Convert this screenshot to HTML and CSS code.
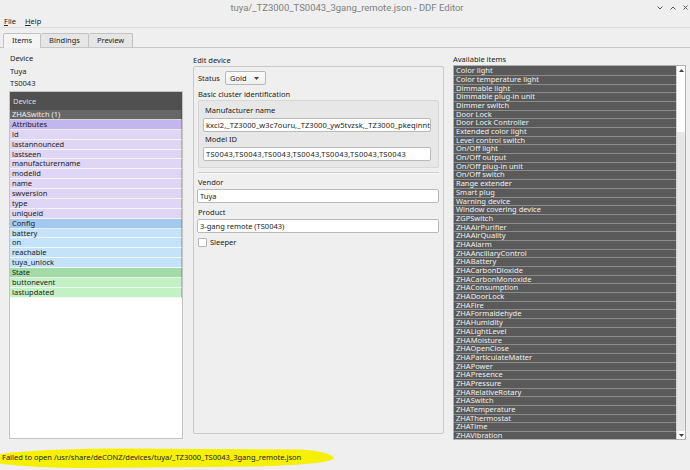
FILE: index.html
```html
<!DOCTYPE html>
<html>
<head>
<meta charset="utf-8">
<link rel="stylesheet" href="styles.css">
</head>
<body>
<div class="window">
  <header class="titlebar">
    <span></span>
    <span class="title">tuya/_TZ3000_TS0043_3gang_remote.json - DDF Editor</span>
    <span class="controls">
      <svg width="6" height="4" viewBox="0 0 6 4"><path d="M0.5 0.5 L3 3 L5.5 0.5" fill="none" stroke="#555" stroke-width="1"/></svg>
      <svg width="6" height="4" viewBox="0 0 6 4"><path d="M0.5 3.5 L3 1 L5.5 3.5" fill="none" stroke="#555" stroke-width="1"/></svg>
      <svg width="5" height="5" viewBox="0 0 5 5"><path d="M0.5 0.5 L4.5 4.5 M4.5 0.5 L0.5 4.5" fill="none" stroke="#555" stroke-width="1"/></svg>
    </span>
  </header>
  <nav class="menubar">
    <span><u>F</u>ile</span>
    <span><u>H</u>elp</span>
  </nav>
  <div class="tabbar">
    <div class="tab active">Items</div>
    <div class="tab">Bindings</div>
    <div class="tab">Preview</div>
  </div>
  <main class="pane">
    <section class="col-left">
      <div class="plain">Device</div>
      <div class="plain">Tuya</div>
      <div class="plain">TS0043</div>
      <div class="tree">
        <div class="tree-head">Device</div>
        <div class="row node">ZHASwitch (1)</div>
        <div class="row attr-h">Attributes</div>
        <div class="row attr">id</div>
        <div class="row attr">lastannounced</div>
        <div class="row attr">lastseen</div>
        <div class="row attr">manufacturername</div>
        <div class="row attr">modelid</div>
        <div class="row attr">name</div>
        <div class="row attr">swversion</div>
        <div class="row attr">type</div>
        <div class="row attr">uniqueid</div>
        <div class="row conf-h">Config</div>
        <div class="row conf">battery</div>
        <div class="row conf">on</div>
        <div class="row conf">reachable</div>
        <div class="row conf">tuya_unlock</div>
        <div class="row state-h">State</div>
        <div class="row state">buttonevent</div>
        <div class="row state">lastupdated</div>
      </div>
    </section>
    <section class="col-mid">
      <div class="caption">Edit device</div>
      <div class="group">
        <div class="status-row">
          <span>Status</span>
          <div class="combo"><span>Gold</span><svg width="5" height="3" viewBox="0 0 5 3"><path d="M0 0 L5 0 L2.5 3 Z" fill="#444"/></svg></div>
        </div>
        <div class="field-label">Basic cluster identification</div>
        <div class="inner-group">
          <div class="field-label inner">Manufacturer name</div>
          <div class="input manu">kxci2,_TZ3000_w3c7ouru,_TZ3000_yw5tvzsk,_TZ3000_pkeqinnt</div>
          <div class="field-label inner">Model ID</div>
          <div class="input model">TS0043,TS0043,TS0043,TS0043,TS0043,TS0043,TS0043</div>
        </div>
        <div class="separator"></div>
        <div class="field-label">Vendor</div>
        <div class="input wide">Tuya</div>
        <div class="field-label">Product</div>
        <div class="input wide">3-gang remote (TS0043)</div>
        <div class="check"><span class="box"></span><span>Sleeper</span></div>
      </div>
    </section>
    <section class="col-right">
      <div class="caption">Available items</div>
      <div class="listbox">
        <div class="list">
          <div class="item">Color light</div>
          <div class="item">Color temperature light</div>
          <div class="item">Dimmable light</div>
          <div class="item">Dimmable plug-in unit</div>
          <div class="item">Dimmer switch</div>
          <div class="item">Door Lock</div>
          <div class="item">Door Lock Controller</div>
          <div class="item">Extended color light</div>
          <div class="item">Level control switch</div>
          <div class="item">On/Off light</div>
          <div class="item">On/Off output</div>
          <div class="item">On/Off plug-in unit</div>
          <div class="item">On/Off switch</div>
          <div class="item">Range extender</div>
          <div class="item">Smart plug</div>
          <div class="item">Warning device</div>
          <div class="item">Window covering device</div>
          <div class="item">ZGPSwitch</div>
          <div class="item">ZHAAirPurifier</div>
          <div class="item">ZHAAirQuality</div>
          <div class="item">ZHAAlarm</div>
          <div class="item">ZHAAncillaryControl</div>
          <div class="item">ZHABattery</div>
          <div class="item">ZHACarbonDioxide</div>
          <div class="item">ZHACarbonMonoxide</div>
          <div class="item">ZHAConsumption</div>
          <div class="item">ZHADoorLock</div>
          <div class="item">ZHAFire</div>
          <div class="item">ZHAFormaldehyde</div>
          <div class="item">ZHAHumidity</div>
          <div class="item">ZHALightLevel</div>
          <div class="item">ZHAMoisture</div>
          <div class="item">ZHAOpenClose</div>
          <div class="item">ZHAParticulateMatter</div>
          <div class="item">ZHAPower</div>
          <div class="item">ZHAPresence</div>
          <div class="item">ZHAPressure</div>
          <div class="item">ZHARelativeRotary</div>
          <div class="item">ZHASwitch</div>
          <div class="item">ZHATemperature</div>
          <div class="item">ZHAThermostat</div>
          <div class="item">ZHATime</div>
          <div class="item">ZHAVibration</div>
        </div>
        <div class="scrollbar">
          <div class="sb-btn"><svg width="5" height="3" viewBox="0 0 5 3"><path d="M0 3 L5 3 L2.5 0 Z" fill="#444"/></svg></div>
          <div class="sb-handle"></div>
          <div class="sb-track"></div>
          <div class="sb-btn"><svg width="5" height="3" viewBox="0 0 5 3"><path d="M0 0 L5 0 L2.5 3 Z" fill="#444"/></svg></div>
        </div>
      </div>
    </section>
  </main>
  <footer class="statusbar">
    <svg class="highlight" width="340" height="24" viewBox="0 0 340 24"><path d="M0 8 C30 4 80 2.5 120 2.5 L300 3.5 C318 4.5 332 8 334 12 C332 16 310 18.5 260 20.5 L90 22 C50 22 15 20 0 17.5 Z" fill="#f6ef06"/></svg>
    <span class="status-text">Failed to open /usr/share/deCONZ/devices/tuya/_TZ3000_TS0043_3gang_remote.json</span>
  </footer>
</div>
</body>
</html>
```
FILE: styles.css
```css
body {
  margin: 0;
  background: #efefef;
  font-family: "Noto Sans", "Open Sans", sans-serif;
  font-size: 7.5px;
  color: #232323;
}

.window {
  width: 690px;
  height: 470px;
  display: flex;
  flex-direction: column;
  overflow: hidden;
}

.titlebar {
  height: 15px;
  display: grid;
  grid-template-columns: 1fr auto 1fr;
  align-items: center;
  font-family: Roboto, sans-serif;
  font-size: 9.5px;
  color: #808080;
}

.title {
  padding-left: 4px;
}

.controls {
  justify-self: end;
  display: flex;
  align-items: center;
  gap: 7px;
  padding-right: 2px;
}

.menubar {
  height: 12px;
  display: flex;
  align-items: center;
  gap: 9px;
  padding-left: 4px;
  border-bottom: 1px solid #dcdcdc;
}

.menubar u {
  text-decoration-thickness: 1px;
  text-underline-offset: 1px;
}

.tabbar {
  margin-top: 5px;
  height: 14px;
  display: flex;
  padding-left: 3px;
  border-bottom: 1px solid #c6c6c6;
}

.tab {
  height: 14px;
  box-sizing: border-box;
  padding: 0 8px;
  line-height: 13px;
  border: 1px solid #c2c2c2;
  border-bottom: none;
  border-left: none;
  background: #e6e6e6;
  border-radius: 2px 2px 0 0;
}

.tab.active {
  height: 15px;
  margin-bottom: -1px;
  border-left: 1px solid #c2c2c2;
  background: #f4f4f4;
}

.pane {
  flex: 1;
  display: flex;
  padding-left: 9px;
  gap: 10px;
  min-height: 0;
}

.col-left {
  width: 174px;
  display: flex;
  flex-direction: column;
  padding-top: 4px;
  padding-bottom: 7px;
}

.plain {
  height: 12.5px;
  line-height: 12.5px;
  padding-left: 1px;
}

.tree {
  margin-top: 1.5px;
  flex: 1;
  background: #fff;
  border: 1px solid #c3c3c3;
  overflow: hidden;
}

.tree-head {
  height: 18px;
  line-height: 18px;
  padding-left: 3px;
  background: #505050;
  color: #dedede;
}

.row {
  height: 9.88px;
  box-sizing: border-box;
  line-height: 9px;
  padding-left: 2px;
  border-bottom: 1px solid rgba(255, 255, 255, 0.75);
  border-right: 1px solid rgba(0, 0, 0, 0.2);
  color: #1c1c1c;
  white-space: nowrap;
}

.row.node { background: #676767; color: #eeeeee; }
.row.attr-h { background: #c3b5ee; }
.row.attr { background: #ded6f4; }
.row.conf-h { background: #a4c9ee; }
.row.conf { background: #c4e2fa; }
.row.state-h { background: #a3dba8; }
.row.state { background: #c4f0c6; }

.col-mid {
  width: 251px;
  display: flex;
  flex-direction: column;
  padding-top: 6px;
  padding-bottom: 12px;
}

.caption {
  height: 12px;
  line-height: 12px;
}

.group {
  flex: 1;
  border: 1px solid #c9c9c9;
  border-radius: 2px;
  padding: 4px 4px 0 4px;
  display: flex;
  flex-direction: column;
}

.status-row {
  height: 14px;
  display: flex;
  align-items: center;
  gap: 5px;
}

.combo {
  width: 41px;
  height: 14px;
  box-sizing: border-box;
  border: 1px solid #b7b7b7;
  border-radius: 2px;
  background: linear-gradient(#fbfbfb, #f0f0f0);
  display: flex;
  align-items: center;
  justify-content: space-between;
  padding: 0 6px 0 4px;
}

.field-label {
  height: 12px;
  line-height: 12px;
  margin-top: 3px;
}

.inner-group {
  background: #e7e7e7;
  border: 1px solid #d6d6d6;
  border-radius: 2px;
  padding: 3px 7px 5px 4px;
}

.field-label.inner {
  margin-top: 0;
  padding-left: 2px;
}

.inner-group .input {
  margin: 2px 0 1px;
}

.input {
  height: 14px;
  box-sizing: border-box;
  line-height: 12px;
  padding-left: 2px;
  background: #fff;
  border: 1px solid #b9b9b9;
  border-radius: 2px;
  white-space: nowrap;
  overflow: hidden;
}

.input.manu {
  letter-spacing: 0.1px;
}

.input.model {
  letter-spacing: 0.27px;
}

.input.wide {
  margin-top: 1px;
  margin-left: -1px;
}

.separator {
  margin-top: 4px;
  height: 0;
  border-top: 1px solid #cbcbcb;
  border-bottom: 1px solid #fafafa;
}

.separator + .field-label {
  margin-top: 2px;
}

.check {
  margin-top: 3px;
  height: 12px;
  display: flex;
  align-items: center;
  gap: 3px;
}

.box {
  width: 9px;
  height: 9px;
  box-sizing: border-box;
  border: 1px solid #b3b3b3;
  border-radius: 1px;
  background: #fff;
}

.col-right {
  width: 233px;
  margin-left: -1px;
  display: flex;
  flex-direction: column;
  padding-top: 5px;
  padding-bottom: 6px;
}

.listbox {
  flex: 1;
  display: flex;
  border: 1px solid #b0b0b0;
  background: #fff;
  min-height: 0;
}

.list {
  flex: 1;
  overflow: hidden;
  padding-top: 1.2px;
  background: #5a5a5a;
}

.item {
  height: 8.7px;
  box-sizing: border-box;
  line-height: 7.7px;
  padding-left: 2px;
  background: #5a5a5a;
  color: #f0f0f0;
  border-bottom: 1px solid #8c8c8c;
  white-space: nowrap;
}

.scrollbar {
  width: 8px;
  display: flex;
  flex-direction: column;
  border-left: 1px solid #d4d4d4;
  background: #fff;
}

.sb-btn {
  height: 8px;
  display: flex;
  align-items: center;
  justify-content: center;
}

.sb-handle {
  height: 58px;
  background: #fdfdfd;
}

.sb-track {
  flex: 1;
  background: #e6e6e6;
}

.statusbar {
  height: 24px;
  position: relative;
  border-top: 1px solid transparent;
  box-sizing: border-box;
}

.highlight {
  position: absolute;
  left: 0;
  top: -1px;
}

.status-text {
  position: relative;
  display: block;
  padding-left: 2px;
  padding-top: 5px;
  line-height: 10px;
  white-space: nowrap;
}
```
